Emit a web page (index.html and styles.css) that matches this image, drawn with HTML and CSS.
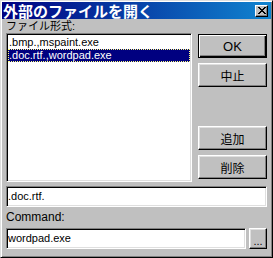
FILE: index.html
```html
<!DOCTYPE html>
<html>
<head>
    <link rel="stylesheet" href="styles.css">
</head>
<body>
    <!-- Dialog Window -->
    <div class="dialog">
        <div class="titlebar">
            <span class="title">外部のファイルを開く</span>
            <div class="close">
                <svg width="8" height="7" viewBox="0 0 8 7" shape-rendering="crispEdges">
                    <path d="M0 0h2v1H0zM6 0h2v1H6zM1 1h2v1H1zM5 1h2v1H5zM2 2h4v1H2zM3 3h2v1H3zM2 4h4v1H2zM1 5h2v1H1zM5 5h2v1H5zM0 6h2v1H0zM6 6h2v1H6z" fill="#000"/>
                </svg>
            </div>
        </div>

        <div class="content">
            <div class="top">
                <div class="label">ファイル形式:</div>
                <ul class="list">
                    <li>.bmp.,mspaint.exe</li>
                    <li class="selected">.doc.rtf.,wordpad.exe</li>
                </ul>
                <div class="buttons">
                    <div class="group">
                        <div class="btn default">OK</div>
                        <div class="btn">中止</div>
                    </div>
                    <div class="group">
                        <div class="btn">追加</div>
                        <div class="btn">削除</div>
                    </div>
                </div>
            </div>

            <div class="edit ext">.doc.rtf.</div>
            <div class="label command">Command:</div>
            <div class="row">
                <div class="edit">wordpad.exe</div>
                <div class="btn browse">...</div>
            </div>
        </div>
    </div>
</body>
</html>
```

FILE: styles.css
```css
body {
    margin: 0;
    background: #c0c0c0;
    font-family: "Liberation Sans", "Noto Sans CJK JP", sans-serif;
    font-size: 11px;
    color: #000;
}
/* Window frame */
.dialog {
    box-sizing: border-box;
    width: 273px;
    height: 258px;
    padding: 1px;
    background: #c0c0c0;
    border: 1px solid;
    border-color: #dfdfdf #000 #000 #dfdfdf;
    box-shadow: inset 1px 1px #fff, inset -1px -1px #808080;
}
.titlebar {
    display: flex;
    align-items: center;
    justify-content: space-between;
    height: 17px;
    padding: 0 3px 0 1px;
    background: linear-gradient(to right, #000080, #1084d0);
}
.title {
    color: #fff;
    font-family: "Noto Sans CJK JP", sans-serif;
    font-size: 15px;
    font-weight: bold;
    line-height: 17px;
    white-space: nowrap;
}
.close {
    box-sizing: border-box;
    display: flex;
    align-items: center;
    justify-content: center;
    width: 13px;
    height: 12px;
    background: #c0c0c0;
    border: 1px solid;
    border-color: #fff #000 #000 #fff;
    box-shadow: inset -1px -1px #808080;
}

/* Content */
.content {
    padding: 0 4px;
}
.top {
    display: grid;
    grid-template-columns: 186px 69px;
    grid-template-rows: 14px 149px;
    column-gap: 6px;
}
.top .label {
    grid-column: 1 / -1;
}
.label {
    line-height: 14px;
    white-space: nowrap;
}
.list {
    box-sizing: border-box;
    margin: 0;
    padding: 2px 1px 1px 1px;
    list-style: none;
    background: #fff;
    border: 1px solid;
    border-color: #808080 #fff #fff #808080;
    box-shadow: inset 1px 1px #000, inset -1px -1px #dfdfdf;
}
.list li {
    box-sizing: border-box;
    height: 13px;
    line-height: 11px;
    border: 1px solid transparent;
    white-space: nowrap;
}
.list li.selected {
    background: #000080;
    color: #fff;
    border: 1px dotted #ffff80;
}
.buttons {
    display: flex;
    flex-direction: column;
    justify-content: space-between;
    padding: 1px 0 3px;
}
.group {
    display: flex;
    flex-direction: column;
    gap: 5px;
}
.btn {
    box-sizing: border-box;
    display: flex;
    align-items: center;
    justify-content: center;
    height: 24px;
    font-size: 12px;
    background: #c0c0c0;
    border: 1px solid;
    border-color: #fff #000 #000 #fff;
    box-shadow: inset -1px -1px #808080, inset 1px 1px #dfdfdf;
}
.btn.default {
    font-size: 13px;
    border-color: #000;
    box-shadow: inset 1px 1px #fff, inset -1px -1px #000, inset -2px -2px #808080;
}
.edit {
    box-sizing: border-box;
    height: 21px;
    padding-left: 1px;
    line-height: 19px;
    background: #fff;
    border: 1px solid;
    border-color: #808080 #fff #fff #808080;
    box-shadow: inset 1px 1px #000, inset -1px -1px #dfdfdf;
    white-space: nowrap;
}
.ext {
    margin-top: 4px;
}
.command {
    height: 21px;
    line-height: 21px;
    font-size: 12px;
}
.row {
    display: flex;
    gap: 3px;
}
.row .edit {
    flex: 1;
}
.browse {
    width: 18px;
    height: 21px;
    font-size: 11px;
    padding-top: 4px;
}
```
